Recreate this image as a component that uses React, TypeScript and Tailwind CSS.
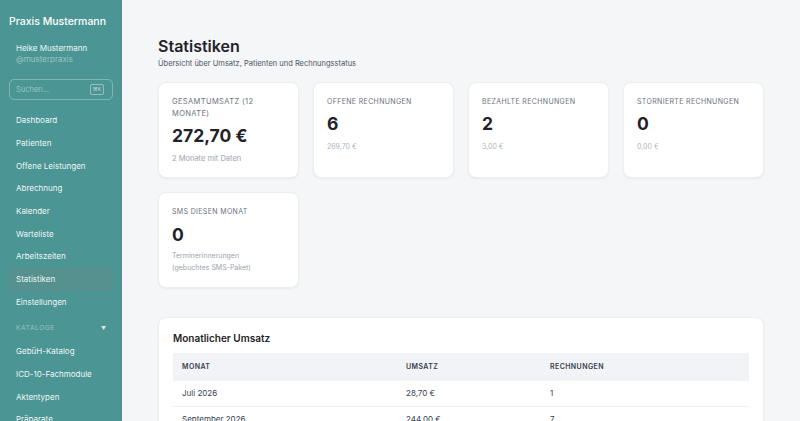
import React from 'react';

const navItems = [
  'Dashboard',
  'Patienten',
  'Offene Leistungen',
  'Abrechnung',
  'Kalender',
  'Warteliste',
  'Arbeitszeiten',
  'Statistiken',
  'Einstellungen',
];

const catalogItems = ['GebüH-Katalog', 'ICD-10-Fachmodule', 'Aktentypen', 'Präparate'];

const stats = [
  { label: 'Gesamtumsatz (12 Monate)', value: '272,70 €', sub: '2 Monate mit Daten', big: true },
  { label: 'Offene Rechnungen', value: '6', sub: '269,70 €' },
  { label: 'Bezahlte Rechnungen', value: '2', sub: '3,00 €' },
  { label: 'Stornierte Rechnungen', value: '0', sub: '0,00 €' },
];

const months = [
  { month: 'Juli 2026', revenue: '28,70 €', invoices: '1' },
  { month: 'September 2026', revenue: '244,00 €', invoices: '7' },
];

function Sidebar() {
  return (
    <aside className="w-[122px] shrink-0 bg-[#4b9694] text-white h-[421px] overflow-hidden">
      <div className="px-[9px] pt-[15px]">
        <div className="text-[10.5px] font-medium leading-[14px]">Praxis Mustermann</div>
        <div className="pl-[7px] mt-[14px]">
          <div className="text-[8px] leading-[11px] text-white/90">Heike Mustermann</div>
          <div className="text-[8px] leading-[11px] text-white/45">@musterpraxis</div>
        </div>

        {/* Search */}
        <div className="mt-[14px] h-[21px] rounded-[5px] border border-white/30 flex items-center justify-between pl-[6px] pr-[8px]">
          <span className="text-[7.5px] text-white/45">Suchen...</span>
          <span className="text-[5px] leading-none border border-white/40 rounded-[2px] px-[2px] py-[2px] text-white/70">⌘K</span>
        </div>

        {/* Navigation */}
        <nav className="mt-[9px] flex flex-col">
          {navItems.map((item) => (
            <div
              key={item}
              className={
                item === 'Statistiken'
                  ? 'h-[22.7px] flex items-center px-[7px] rounded-[4px] bg-[#56918f] text-[8px] text-white/95'
                  : 'h-[22.7px] flex items-center px-[7px] rounded-[4px] text-[8px] text-white/95'
              }
            >
              {item}
            </div>
          ))}
          <div className="mt-[4px] h-[22.7px] flex items-center justify-between px-[7px]">
            <span className="text-[6.5px] tracking-[0.1em] text-white/45">KATALOGE</span>
            <span className="text-[5px] text-white/80">▼</span>
          </div>
          {catalogItems.map((item) => (
            <div key={item} className="h-[22.7px] flex items-center px-[7px] text-[8px] text-white/95">
              {item}
            </div>
          ))}
        </nav>
      </div>
    </aside>
  );
}

function StatCard({ label, value, sub, big }: { label: string; value: string; sub: React.ReactNode; big?: boolean }) {
  return (
    <div className="bg-white rounded-[8px] border border-[#eceef1] shadow-[0_1px_2px_rgba(0,0,0,0.05)] p-[13px]">
      <div
        className={
          big
            ? 'text-[7.5px] leading-[12px] uppercase tracking-[0.05em] text-[#6b7280] pr-[18px]'
            : 'text-[7px] leading-[12px] uppercase tracking-[0.05em] text-[#6b7280] whitespace-nowrap'
        }
      >
        {label}
      </div>
      <div
        className={
          big
            ? 'mt-[5px] text-[17.5px] leading-[22px] font-bold text-[#1f2329]'
            : 'mt-[5px] text-[17.5px] leading-[22px] font-bold text-[#1f2329]'
        }
      >
        {value}
      </div>
      <div
        className={
          big
            ? 'mt-[6px] text-[7.5px] leading-[11px] text-[#9ca3af]'
            : 'mt-[6px] text-[7px] leading-[11px] text-[#b0b5bd]'
        }
      >
        {sub}
      </div>
    </div>
  );
}

export default function App() {
  return (
    <div className="flex w-[800px] h-[421px] overflow-hidden bg-[#f5f6f8]" style={{ fontFamily: 'Inter, "Noto Sans", sans-serif' }}>
      <Sidebar />
      <main className="flex-1 px-[36px] pt-[35px]">
        <h1 className="text-[16px] leading-[22px] font-semibold text-[#1f2329]">Statistiken</h1>
        <p className="mt-[1px] text-[7.5px] leading-[11px] text-[#4b5563]">
          Übersicht über Umsatz, Patienten und Rechnungsstatus
        </p>

        <div className="mt-[13px] grid grid-cols-4 gap-[14px]">
          {stats.map((s) => (
            <StatCard key={s.label} label={s.label} value={s.value} sub={s.sub} big={s.big} />
          ))}
          <div className="bg-white rounded-[8px] border border-[#eceef1] shadow-[0_1px_2px_rgba(0,0,0,0.05)] p-[13px]">
            <div className="text-[7px] leading-[12px] uppercase tracking-[0.05em] text-[#6b7280]">SMS diesen Monat</div>
            <div className="mt-[6px] text-[17.5px] leading-[22px] font-bold text-[#1f2329]">0</div>
            <div className="mt-[4px] text-[7px] leading-[12px] text-[#9ca3af]">
              Terminerinnerungen
              <br />
              (gebuchtes SMS-Paket)
            </div>
          </div>
        </div>

        {/* Monthly revenue */}
        <section className="mt-[29px] bg-white rounded-[8px] border border-[#eceef1] shadow-[0_1px_2px_rgba(0,0,0,0.05)] px-[14px] pt-[13px] pb-[14px]">
          <h2 className="text-[10px] leading-[14px] font-semibold text-[#1f2329]">Monatlicher Umsatz</h2>
          <div className="mt-[8px]">
            <div className="grid grid-cols-[224px_144px_1fr] h-[28px] items-center bg-[#f2f3f6] text-[7px] font-semibold tracking-[0.06em] text-[#374151]">
              <div className="pl-[9px]">MONAT</div>
              <div className="pl-[9px]">UMSATZ</div>
              <div className="pl-[9px]">RECHNUNGEN</div>
            </div>
            {months.map((m) => (
              <div
                key={m.month}
                className="grid grid-cols-[224px_144px_1fr] h-[25.5px] items-center border-b border-[#eef0f2] text-[8px] text-[#374151]"
              >
                <div className="pl-[9px]">{m.month}</div>
                <div className="pl-[9px]">{m.revenue}</div>
                <div className="pl-[9px]">{m.invoices}</div>
              </div>
            ))}
          </div>
        </section>
      </main>
    </div>
  );
}
